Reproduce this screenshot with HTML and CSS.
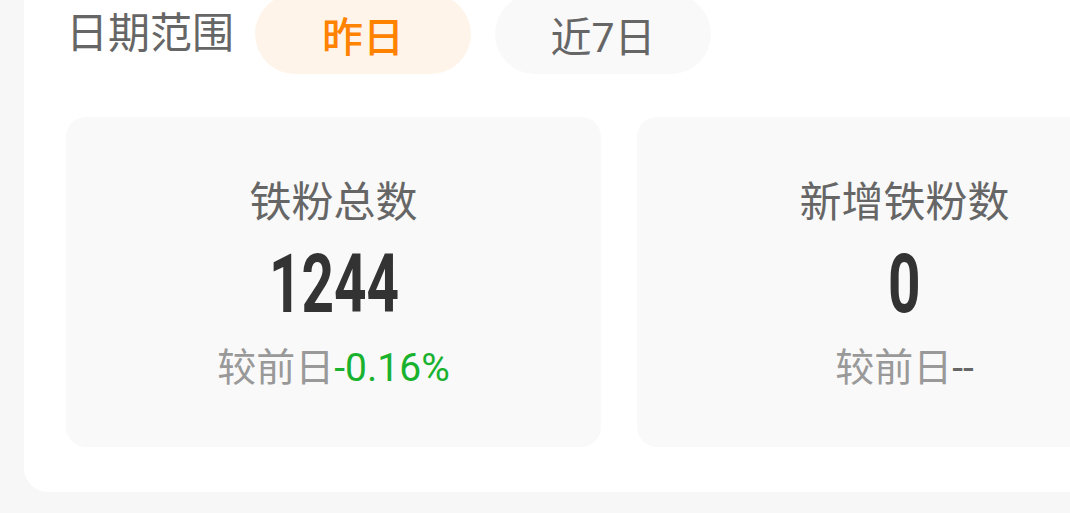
FILE: index.html
```html
<!DOCTYPE html>
<html lang="zh-CN">
<head>
<meta charset="utf-8">
<title>铁粉数据</title>
<link rel="stylesheet" href="styles.css">
</head>
<body>
  <section class="panel">
    <div class="filter-row">
      <span class="filter-label">日期范围</span>
      <button class="pill pill-active">昨日</button>
      <button class="pill">近7日</button>
    </div>
    <div class="stats">
      <div class="stat-card">
        <div class="stat-title">铁粉总数</div>
        <div class="stat-value"><span class="digits">1244</span></div>
        <div class="stat-compare">较前日<span class="trend-down">-0.16%</span></div>
      </div>
      <div class="stat-card">
        <div class="stat-title">新增铁粉数</div>
        <div class="stat-value"><span class="digits">0</span></div>
        <div class="stat-compare">较前日<span class="trend-none">--</span></div>
      </div>
    </div>
  </section>
</body>
</html>
```

FILE: styles.css
```css
html, body {
  margin: 0;
  padding: 0;
}

body {
  background: #f7f7f7;
  overflow: hidden;
  font-family: Roboto, "Noto Sans CJK SC", sans-serif;
}

.panel {
  box-sizing: border-box;
  width: 1190px;
  margin: -46px 0 0 24px;
  padding: 40px 42px 45px 42px;
  background: #ffffff;
  border-radius: 24px;
}

.filter-row {
  display: flex;
  align-items: center;
  gap: 24px;
  height: 80px;
}

.filter-label {
  font-size: 42px;
  color: #666666;
  line-height: 80px;
  margin-right: -3px;
}

.pill {
  width: 216px;
  height: 80px;
  border: none;
  border-radius: 40px;
  background: #f9f9f9;
  color: #666666;
  font-family: Roboto, "Noto Sans CJK SC", sans-serif;
  font-size: 41px;
  padding: 0;
  cursor: pointer;
}

.pill-active {
  background: #fff4e9;
  color: #ff8200;
  font-weight: 500;
}

.stats {
  display: flex;
  gap: 36px;
  margin-top: 43px;
}

.stat-card {
  flex: 0 0 535px;
  height: 330px;
  box-sizing: border-box;
  padding-top: 58px;
  background: #f9f9f9;
  border-radius: 20px;
  display: flex;
  flex-direction: column;
  align-items: center;
  text-align: center;
}

.stat-title {
  font-size: 42px;
  line-height: 56px;
  color: #666666;
}

.stat-value {
  height: 100px;
  line-height: 100px;
  margin-top: 4px;
  margin-bottom: -4px;
}

/* condensed figures: narrow the bold digits horizontally */
.digits {
  display: inline-block;
  font-family: Roboto, sans-serif;
  font-weight: 700;
  font-size: 81px;
  color: #333333;
  transform: scaleX(0.7);
}

.stat-compare {
  margin-top: 12px;
  font-size: 39px;
  line-height: 50px;
  color: #999999;
}

.trend-down {
  color: #19b22e;
}

.trend-none {
  color: #666666;
}
```
